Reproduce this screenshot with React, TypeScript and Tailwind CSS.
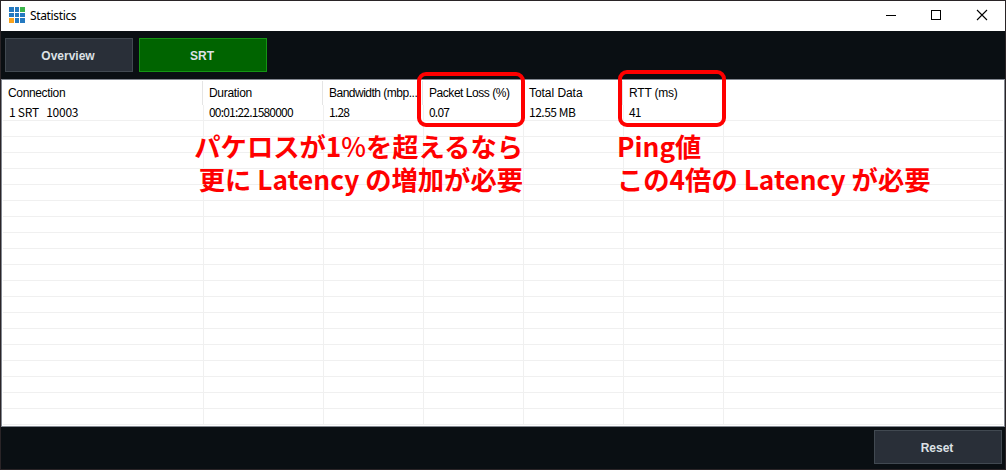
import React from 'react';

const logo = [
  '#2479c0', '#2479c0', '#3bb44a',
  '#2479c0', '#2479c0', '#2479c0',
  '#faa21b', '#2479c0', '#2479c0',
];
const tileStart = [0, 6, 11];
const tileSize = [5, 4, 5];

type Column = { title: string; value: string; width: string; titleStyle: string; valueStyle: string };

const columns: Column[] = [
  { title: 'Connection', value: '1 SRT   10003', width: 'w-[201px]', titleStyle: 'tracking-[-0.35px] pl-[6px]', valueStyle: 'pl-[6px] tracking-[-0.25px]' },
  { title: 'Duration', value: '00:01:22.1580000', width: 'w-[120px]', titleStyle: 'pl-[6px] tracking-[-0.3px]', valueStyle: 'pl-[5px] tracking-[-0.8px]' },
  { title: 'Bandwidth (mbp...', value: '1.28', width: 'w-[100px]', titleStyle: 'pl-[6px] tracking-[-0.5px]', valueStyle: 'pl-[5px] tracking-[-0.8px]' },
  { title: 'Packet Loss (%)', value: '0.07', width: 'w-[100px]', titleStyle: 'pl-[6px] tracking-[-0.45px]', valueStyle: 'pl-[5px] tracking-[-0.8px]' },
  { title: 'Total Data', value: '12.55 MB', width: 'w-[100px]', titleStyle: 'pl-[6px] tracking-[-0.05px]', valueStyle: 'pl-[5px] tracking-[-0.5px]' },
  { title: 'RTT (ms)', value: '41', width: 'w-[100px]', titleStyle: 'pl-[6px] tracking-[-0.2px]', valueStyle: 'pl-[5px] tracking-[-0.8px]' },
];

function TitleBar() {
  return (
    <header className="flex h-[30px] shrink-0 items-center bg-white">
      <svg className="ml-2 mt-[-2px] h-4 w-4" viewBox="0 0 16 16" shapeRendering="crispEdges">
        {logo.map((color, i) => {
          const col = i % 3;
          const row = Math.floor(i / 3);
          return <rect key={i} x={tileStart[col]} y={tileStart[row]} width={tileSize[col]} height={tileSize[row]} fill={color} />;
        })}
      </svg>
      <h1 className="ml-[5px] font-['Noto_Sans'] text-[12px] leading-none tracking-[-0.35px] text-black">Statistics</h1>
      <div className="ml-auto flex items-center">
        <svg className="h-[30px] w-[120px]" viewBox="0 0 120 30" fill="none" stroke="black" shapeRendering="crispEdges">
          <path d="M1 14.5H11" />
          <rect x="46.5" y="9.5" width="9" height="9" />
          <path d="M92 9L102 19M102 9L92 19" shapeRendering="auto" strokeWidth="1.1" />
        </svg>
      </div>
    </header>
  );
}

function Button({ label, active = false }: { label: string; active?: boolean }) {
  return (
    <button
      className={`h-[34px] w-[128px] border pr-[2px] pt-[2px] font-['Liberation_Sans'] text-[12px] font-bold leading-none text-[#dde1e5] ${
        active ? 'border-[#149414] bg-[#006400]' : 'border-[#414951] bg-[#292f38]'
      }`}
    >
      {label}
    </button>
  );
}

function Table() {
  return (
    <section className="flex h-[348px] shrink-0 flex-col border border-[#828790] bg-white text-[12px] text-black">
      <div className="mt-px flex h-[24px] shrink-0 font-['Liberation_Sans']">
        {columns.map((c) => (
          <div key={c.title} className={`${c.width} ${c.titleStyle} shrink-0 whitespace-nowrap border-r border-[#e5e5e5] leading-[25px]`}>
            {c.title}
          </div>
        ))}
      </div>
      <div className="ml-px h-[320px] w-[1000px] bg-[repeating-linear-gradient(to_bottom,transparent_0px,transparent_15px,#f0f0f0_15px,#f0f0f0_16px)]">
        <div className="flex h-full font-['Noto_Sans_CJK_JP',sans-serif]">
          {columns.map((c) => (
            <div key={c.title} className={`${c.width} ${c.valueStyle} shrink-0 whitespace-pre border-r border-[#f0f0f0] leading-[14px]`}>
              {c.value}
            </div>
          ))}
        </div>
      </div>
    </section>
  );
}

function Annotations() {
  return (
    <div className="pointer-events-none absolute inset-0 whitespace-nowrap font-['Noto_Sans_CJK_JP',sans-serif] text-[26.3px] font-bold leading-[33px] text-[#ff0000]">
      <div className="absolute left-[416px] top-[71px] h-[55px] w-[108px] rounded-[9px] border-4 border-[#ff0000]" />
      <div className="absolute left-[617px] top-[69px] h-[57px] w-[108px] rounded-[9px] border-4 border-[#ff0000]" />
      <p className="absolute right-[482px] top-[128px] text-right">パケロスが1<span className="font-medium">%</span>を超えるなら<br />更に Latency の増加が必要</p>
      <p className="absolute left-[616px] top-[128px]">Ping値<br />この4倍の Latency が必要</p>
    </div>
  );
}

export default function App() {
  return (
    <main className="relative h-[470px] w-[1006px] overflow-hidden border border-[#2a2427] bg-[#0a0f13]">
      <TitleBar />
      <nav className="flex h-[48px] gap-[6px] pl-[4px] pt-[7px]">
        <Button label="Overview" />
        <Button label="SRT" active />
      </nav>
      <Table />
      <footer className="flex justify-end pr-[3px] pt-[3px]">
        <Button label="Reset" />
      </footer>
      <Annotations />
    </main>
  );
}
